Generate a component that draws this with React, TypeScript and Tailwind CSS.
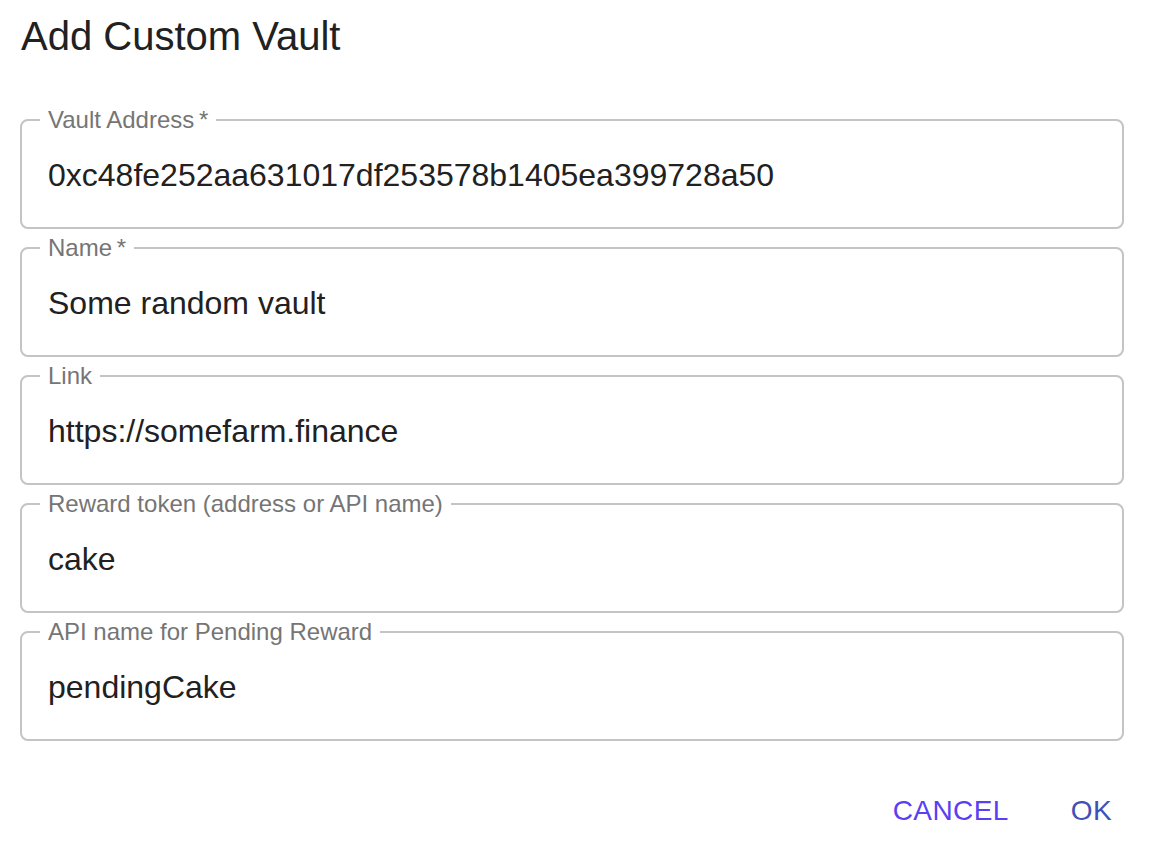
const fields = [
  { label: "Vault Address", required: true, value: "0xc48fe252aa631017df253578b1405ea399728a50" },
  { label: "Name", required: true, value: "Some random vault" },
  { label: "Link", required: false, value: "https://somefarm.finance" },
  { label: "Reward token (address or API name)", required: false, value: "cake" },
  { label: "API name for Pending Reward", required: false, value: "pendingCake" },
];

function OutlinedField({ label, required, value }: { label: string; required: boolean; value: string }) {
  return (
    <fieldset className="border-2 border-[#c4c4c4] rounded-[8px] pl-[26px] pr-[26px] pt-[24px] pb-[33px] m-0 min-w-0">
      <legend className="-ml-[8px] px-[8px] text-[24px] leading-[24px] text-[#757575]">
        {label}
        {required && <span>&thinsp;*</span>}
      </legend>
      <input
        className="block w-full h-[38px] text-[32px] leading-[38px] text-[#212121] outline-none bg-transparent p-0"
        defaultValue={value}
      />
    </fieldset>
  );
}

export default function App() {
  return (
    <div className="w-[1150px] h-[842px] bg-white font-['Liberation_Sans',Arial,sans-serif] overflow-hidden">
      <h2 className="pt-[4px] pl-[21px] text-[40px] leading-[64px] font-normal text-[#212121]">
        Add Custom Vault
      </h2>
      <div className="mt-[40px] ml-[20px] mr-[26px] flex flex-col gap-[7px]">
        {fields.map((f) => (
          <OutlinedField key={f.label} {...f} />
        ))}
      </div>
      <div className="mt-[45px] flex justify-end gap-[30px] pr-[22px]">
        <button className="px-[16px] text-[28px] leading-[49px] tracking-[0.4px] text-[#5b3ff2]">
          CANCEL
        </button>
        <button className="px-[16px] text-[28px] leading-[49px] tracking-[0.4px] text-[#3f51b5]">
          OK
        </button>
      </div>
    </div>
  );
}
